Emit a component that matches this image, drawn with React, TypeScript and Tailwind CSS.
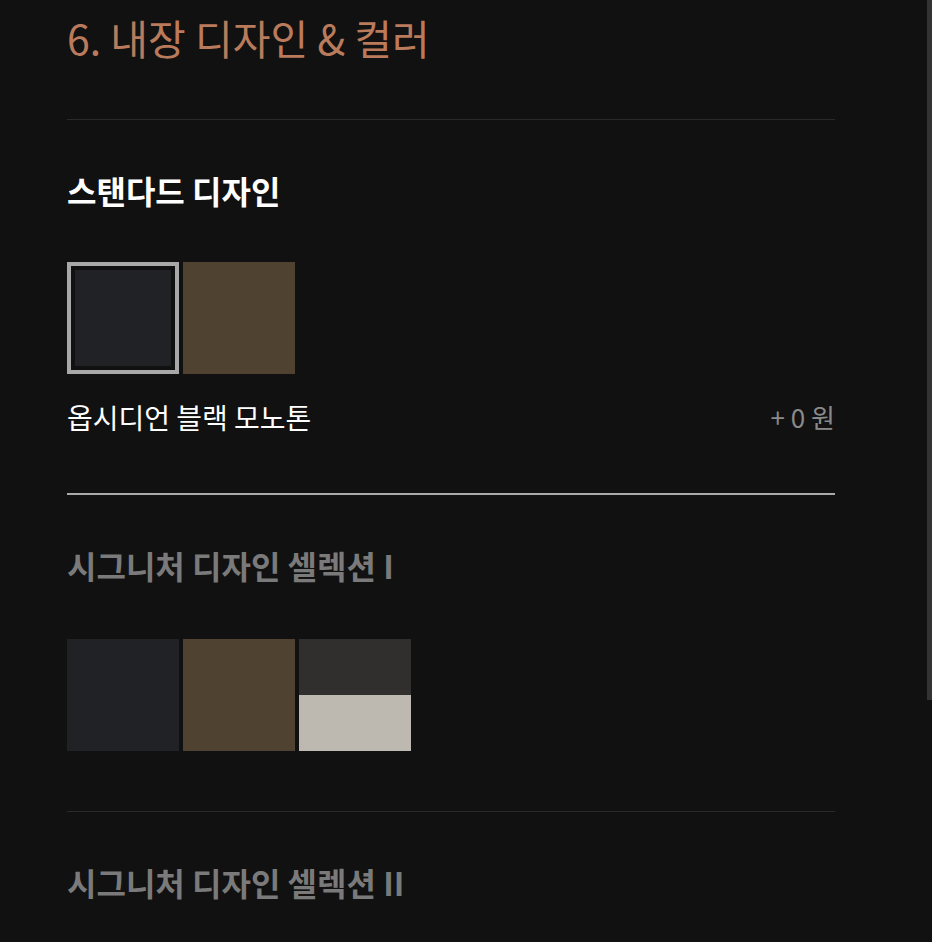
const font = { fontFamily: '"Noto Sans CJK KR", "Noto Sans", sans-serif' }

type Swatch = { top: string; bottom?: string }

const sections: {
  title: string
  active: boolean
  swatches: Swatch[]
  selected?: number
  label?: string
  price?: string
}[] = [
  {
    title: "스탠다드 디자인",
    active: true,
    swatches: [{ top: "#212226" }, { top: "#4f4230" }],
    selected: 0,
    label: "옵시디언 블랙 모노톤",
    price: "+ 0 원",
  },
  {
    title: "시그니처 디자인 셀렉션 I",
    active: false,
    swatches: [{ top: "#212226" }, { top: "#4f4230" }, { top: "#302f2d", bottom: "#bdb8b0" }],
  },
  {
    title: "시그니처 디자인 셀렉션 II",
    active: false,
    swatches: [],
  },
]

function SwatchBox({ swatch, selected }: { swatch: Swatch; selected: boolean }) {
  return (
    <button
      className={`w-[112px] h-[112px] flex flex-col ${
        selected ? "border-4 border-[#a8a8a8] p-1 bg-[#111111]" : ""
      }`}
    >
      <span className="flex-1 w-full" style={{ backgroundColor: swatch.top }} />
      {swatch.bottom && <span className="flex-1 w-full" style={{ backgroundColor: swatch.bottom }} />}
    </button>
  )
}

export default function App() {
  return (
    <div className="min-h-screen bg-[#111111] relative" style={font}>
      {/* scrollbar */}
      <div className="absolute right-0 top-0 w-[5px] h-[700px] bg-[#333333]" />

      <div className="w-[768px] ml-[67px]">
        <h2 className="pt-[9px] pb-[54px] text-[41px] leading-[56px] text-[#b97b5b] border-b border-[#2a2a2a]">
          6. 내장 디자인 &amp; 컬러
        </h2>

        {sections.map((s, i) => (
          <section
            key={i}
            className={
              s.active
                ? "pt-[50px] pb-[59px] border-b-2 border-[#aaaaaa]"
                : i < sections.length - 1
                  ? "pt-[50px] pb-[60px] border-b border-[#2a2a2a]"
                  : "pt-[50px] pb-[60px]"
            }
          >
            <h3
              className={`text-[32px] leading-[40px] font-bold ${
                s.active ? "text-white" : "text-[#7a7a7a]"
              }`}
            >
              {s.title}
            </h3>
            {s.swatches.length > 0 && (
              <div className={`${s.active ? "mt-[52px]" : "mt-[54px]"} flex gap-1`}>
                {s.swatches.map((sw, j) => (
                  <SwatchBox key={j} swatch={sw} selected={s.selected === j} />
                ))}
              </div>
            )}
            {s.label && (
              <div className="mt-[26px] flex items-center justify-between leading-[34px]">
                <span className="text-[28px] text-white">{s.label}</span>
                <span className="text-[26px] text-[#8a8a8a]">{s.price}</span>
              </div>
            )}
          </section>
        ))}
      </div>
    </div>
  )
}
